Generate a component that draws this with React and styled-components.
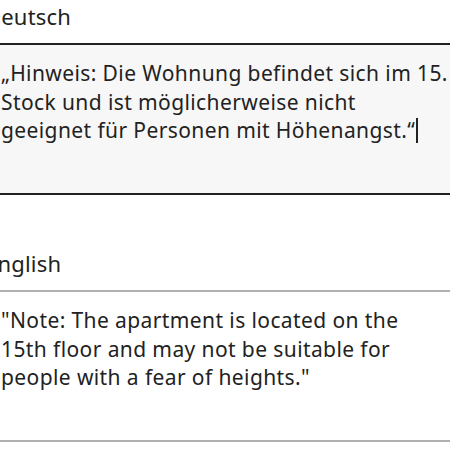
import React from 'react';
import styled, { createGlobalStyle } from 'styled-components';

const GlobalStyle = createGlobalStyle`
	html, body {
		margin: 0;
		padding: 0;
		background: #ffffff;
		overflow: hidden;
	}
	body {
		font-family: 'Noto Sans', 'Open Sans', sans-serif;
		color: #222222;
	}
`;

const translations = [
	{
		id: 'de',
		label: 'Deutsch',
		text: '„Hinweis: Die Wohnung befindet sich im 15. Stock und ist möglicherweise nicht geeignet für Personen mit Höhenangst.“',
		active: true,
	},
	{
		id: 'en',
		label: 'English',
		text: '"Note: The apartment is located on the 15th floor and may not be suitable for people with a fear of heights."',
		active: false,
	},
];

function App() {
	return (
		<>
			<GlobalStyle />
			<Page>
				{translations.map((item) => (
					<Section key={item.id}>
						<Label>{item.label}</Label>
						<Field $active={item.active}>
							<FieldText>
								{item.text}
								{item.active && <Caret />}
							</FieldText>
						</Field>
					</Section>
				))}
			</Page>
		</>
	);
}

export default App;

const Page = styled.div`
	display: flex;
	flex-direction: column;
	gap: 54px;
	width: 500px;
	margin-left: -16px;
	padding-top: 2px;
`;

const Section = styled.section`
	display: flex;
	flex-direction: column;
	gap: 13px;
`;

const Label = styled.div`
	font-size: 22px;
	line-height: 28px;
	padding-left: 1px;
	letter-spacing: 0.2px;
`;

const Field = styled.div`
	box-sizing: border-box;
	height: 152px;
	padding: 14px 0 0 17px;
	border-top: 2px solid ${(p) => (p.$active ? '#222222' : '#b0b0b0')};
	border-bottom: 2px solid ${(p) => (p.$active ? '#222222' : '#b0b0b0')};
	background: ${(p) => (p.$active ? '#f7f7f7' : '#ffffff')};
`;

const FieldText = styled.div`
	width: 448px;
	font-size: 21px;
	line-height: 28.5px;
	letter-spacing: 0.4px;
`;

const Caret = styled.span`
	display: inline-block;
	width: 2px;
	height: 25px;
	margin-left: 1px;
	vertical-align: -5px;
	background: #222222;
`;
